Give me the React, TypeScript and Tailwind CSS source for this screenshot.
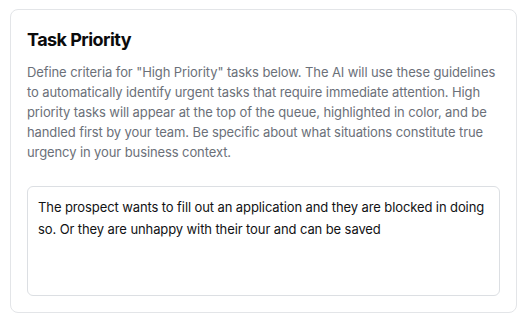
export default function App() {
  return (
    <div className="min-h-screen bg-white px-[10px] pt-[9px] font-['Inter',_sans-serif]">
      <section className="w-[507px] rounded-lg border border-[#e3e5e8] bg-white px-4 pb-4 pt-4">
        <h2 className="text-[18px] font-bold leading-7 tracking-[-0.55px] text-[#0b0b0c]">Task Priority</h2>
        <p className="mt-2 text-[13px] leading-5 tracking-[-0.1px] text-[#6b7079]">
          Define criteria for "High Priority" tasks below. The AI will use these guidelines to automatically identify
          urgent tasks that require immediate attention. High priority tasks will appear at the top of the queue,
          highlighted in color, and be handled first by your team. Be specific about what situations constitute true
          urgency in your business context.
        </p>
        <textarea
          className="mt-6 block h-[110px] w-full resize-none rounded-md border border-[#dcdfe3] px-2.5 pb-2.5 pt-[9px] text-[13px] leading-[22px] tracking-[-0.1px] text-[#111214] outline-none"
          defaultValue="The prospect wants to fill out an application and they are blocked in doing so. Or they are unhappy with their tour and can be saved"
        />
      </section>
    </div>
  );
}
